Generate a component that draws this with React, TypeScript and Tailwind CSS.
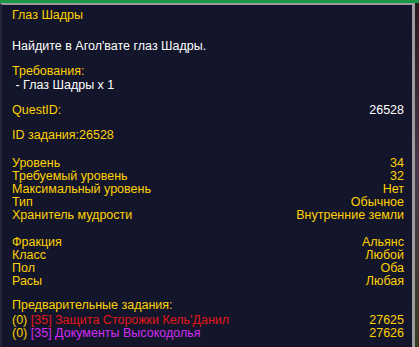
import React from 'react';

const Y = 'text-[#ffd100]';

type Row = { label: string; value: string };

const levelRows: Row[] = [
  { label: 'Уровень', value: '34' },
  { label: 'Требуемый уровень', value: '32' },
  { label: 'Максимальный уровень', value: 'Нет' },
  { label: 'Тип', value: 'Обычное' },
  { label: 'Хранитель мудрости', value: 'Внутренние земли' },
];

const factionRows: Row[] = [
  { label: 'Фракция', value: 'Альянс' },
  { label: 'Класс', value: 'Любой' },
  { label: 'Пол', value: 'Оба' },
  { label: 'Расы', value: 'Любая' },
];

const Line: React.FC<{ className?: string; children: React.ReactNode }> = ({ className = '', children }) => (
  <div className={`flex h-[13px] items-center justify-between whitespace-nowrap leading-[13px] ${className}`}>{children}</div>
);

const App: React.FC = () => {
  return (
    <div
      className="flex h-[347px] w-[419px] flex-col overflow-hidden bg-[#13152a] text-[12.5px]"
      style={{ fontFamily: '"Liberation Sans", Arial, sans-serif' }}
    >
      {/* top green strip */}
      <div className="h-[3px] w-full shrink-0 bg-[#1c9646]" />
      <div className="flex min-h-0 flex-1">
        {/* tooltip panel */}
        <div className="flex w-[415px] flex-col border-t-2 border-r-[3px] border-l-2 border-t-[#9c9c9c] border-r-[#9c9c9c] border-l-[#232538] bg-[#13152a] pt-[4px] pr-[8px] pl-[10px]">
          <Line className={Y}>Глаз Шадры</Line>

          <Line className="mt-[18px] text-white">Найдите в Агол'вате глаз Шадры.</Line>

          <Line className={`mt-[12px] ${Y}`}>Требования:</Line>
          <Line className="mt-[1px] text-white">&nbsp;- Глаз Шадры x 1</Line>

          <Line className="mt-[12px]">
            <span className={Y}>QuestID:</span>
            <span className="text-white">26528</span>
          </Line>

          <Line className={`mt-[12px] ${Y}`}>ID задания:26528</Line>

          <div className="mt-[15px] flex flex-col">
            {levelRows.map((r) => (
              <Line key={r.label} className={Y}>
                <span>{r.label}</span>
                <span>{r.value}</span>
              </Line>
            ))}
          </div>

          <div className="mt-[14px] flex flex-col">
            {factionRows.map((r) => (
              <Line key={r.label} className={Y}>
                <span>{r.label}</span>
                <span>{r.value}</span>
              </Line>
            ))}
          </div>

          <Line className={`mt-[11px] ${Y}`}>Предварительные задания:</Line>
          <Line className="mt-[2px]">
            <span>
              <span className={Y}>(0) </span>
              <span className="text-[#e01818]">[35] Защита Сторожки Кель'Данил</span>
            </span>
            <span className={Y}>27625</span>
          </Line>
          <Line>
            <span>
              <span className={Y}>(0) </span>
              <span className="text-[#d22cf5]">[35] Документы Высокодолья</span>
            </span>
            <span className={Y}>27626</span>
          </Line>
        </div>
        {/* game world behind */}
        <div className="flex-1 bg-gradient-to-b from-[#2a1820] via-[#4a3a4c] to-[#3a3a20]" />
      </div>
    </div>
  );
};

export default App;
